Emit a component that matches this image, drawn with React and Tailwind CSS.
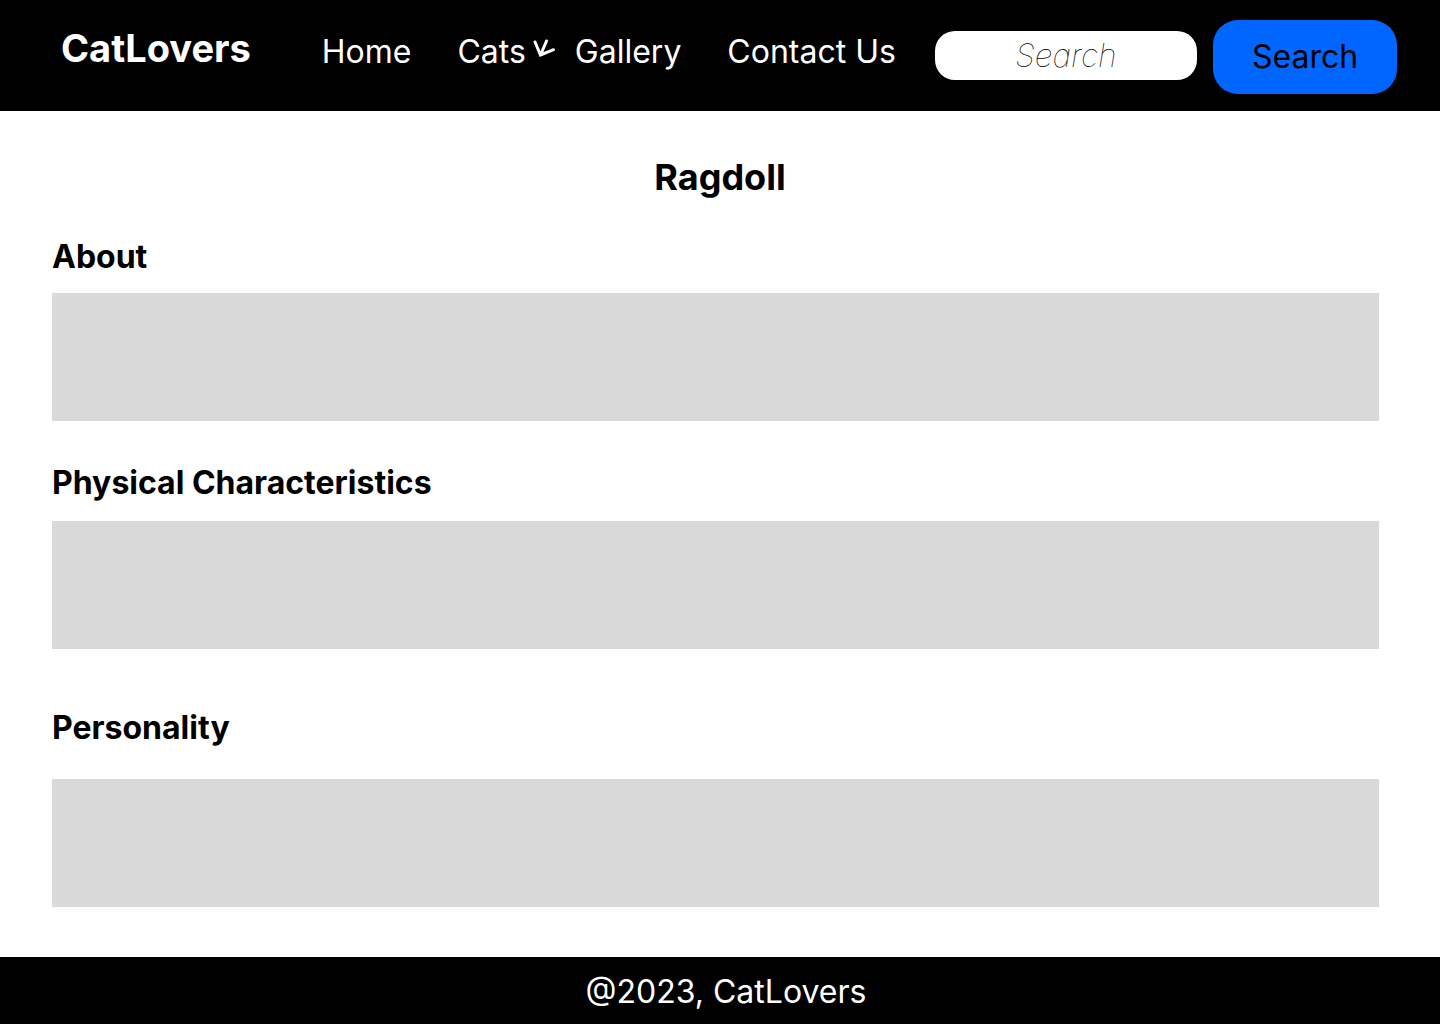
const sections = [
  { title: "About", heading: "pt-10", gap: "mt-4" },
  { title: "Physical Characteristics", heading: "pt-[42px]", gap: "mt-[18px]" },
  { title: "Personality", heading: "pt-[59px]", gap: "mt-[31px]" },
];

const link = "text-[32px] leading-10 font-normal text-white whitespace-nowrap";

export default function App() {
  return (
    <div className="flex min-h-screen flex-col bg-white font-['Inter',sans-serif] text-black">
      <header className="flex items-start bg-black pt-5 pr-[43px] pb-[17px] pl-[61px]">
        <a href="#" className="mt-2 text-[38px] leading-10 font-bold text-white">
          CatLovers
        </a>
        <nav className="mt-3 ml-[71px] flex flex-1 items-start">
          <a href="#home" className={link}>Home</a>
          <a href="#cats" className={`${link} ml-[46px] flex items-start`}>
            Cats
            <svg className="mt-[6px] ml-[6px]" width="24" height="22" viewBox="0 0 24 22" fill="none" stroke="white" strokeWidth="3" strokeLinecap="round" aria-hidden="true">
              <path d="M3 4 8.5 17 21.5 11.7M8.5 17 14.5 3" />
              <path d="M8 14 8.5 17 12 15Z" fill="white" strokeWidth="1" />
            </svg>
          </a>
          <a href="#gallery" className={`${link} ml-[19px]`}>Gallery</a>
          <a href="#contact" className={`${link} ml-[46px]`}>Contact Us</a>
        </nav>
        <form className="flex items-start" onSubmit={(e) => e.preventDefault()}>
          <input
            type="text"
            aria-label="Search"
            placeholder="Search"
            className="mt-[11px] h-[49px] w-[262px] rounded-[20px] bg-white text-center text-[32px] font-thin italic text-black outline-none placeholder:text-black"
          />
          <button type="submit" className="ml-4 h-[74px] w-[184px] rounded-[25px] bg-[#0066ff] text-[32px] font-normal text-black">
            Search
          </button>
        </form>
      </header>

      <main className="flex-1 pb-[50px] pt-[46px]">
        <h1 className="text-center text-4xl leading-10 font-bold">Ragdoll</h1>
        <div className="pr-[61px] pl-[52px]">
          {sections.map((s) => (
            <section key={s.title} className={s.heading}>
              <h2 className="text-[32px] leading-10 font-bold">{s.title}</h2>
              <div className={`${s.gap} h-32 bg-[#d9d9d9]`} />
            </section>
          ))}
        </div>
      </main>

      <footer className="bg-black pt-[15px] pb-3 pl-3 text-center text-[32px] leading-10 font-normal text-white">
        @2023, CatLovers
      </footer>
    </div>
  );
}
